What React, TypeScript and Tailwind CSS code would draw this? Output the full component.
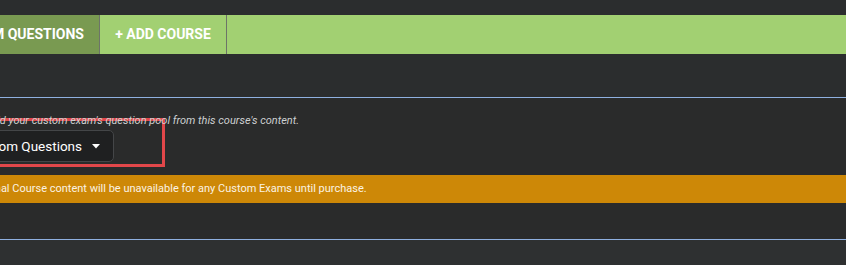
import React from 'react';

const App: React.FC = () => {
  return (
    <div className="w-[846px] h-[265px] overflow-hidden bg-[#2b2d2e] font-['Roboto',sans-serif] text-white">
      {/* Tabs bar */}
      <div className="pt-[15px]">
        <div className="flex h-[39px] bg-[#a2d072]">
          <div className="w-[100px] flex justify-end items-center overflow-hidden bg-[#799a51] border-r border-[#6d7468] pr-[15px]">
            <span className="whitespace-nowrap text-[14px] font-bold">CUSTOM QUESTIONS</span>
          </div>
          <div className="w-[127px] flex items-center justify-center border-r border-[#6d7468]">
            <span className="whitespace-nowrap text-[14px] font-bold">+ ADD COURSE</span>
          </div>
        </div>
      </div>

      {/* Sub header */}
      <div className="h-[44px] border-b border-[#8fb0e0] flex items-start pt-[8px]">
        <span className="-ml-[7px] text-[13px] text-[#cfd2d4]">e</span>
      </div>

      {/* Panel */}
      <div className="bg-[#2a2b2b] border-b border-[#8fb0e0] h-[142px] pt-[16px]">
        <p className="-ml-[18px] text-[11px] italic text-[#cdd0d1] leading-[14px] whitespace-nowrap">
          Build your custom exam's question pool from this course's content.
        </p>
        <div className="-ml-[60px] mt-[-10px] w-[225px] h-[49px] border-[3px] border-[#e2474a] flex items-start pt-[9px] pl-[15px]">
          <button className="h-[32px] pl-[12px] pr-[13px] flex items-center gap-[10px] rounded-[5px] border border-[#444648] bg-[#1f2021] text-[13.5px] text-white whitespace-nowrap">
            Custom Questions
            <svg width="8" height="5" viewBox="0 0 8 5">
              <path d="M0 0h8L4 4.5z" fill="#ffffff" />
            </svg>
          </button>
        </div>
        <div className="mt-[8px] h-[28px] bg-[#cd8807] flex items-center">
          <span className="-ml-[40px] text-[11px] text-[#fbf3e4] whitespace-nowrap">
            Additional Course content will be unavailable for any Custom Exams until purchase.
          </span>
        </div>
      </div>

      {/* Below */}
      <div className="h-[30px] bg-[#2e3031]" />
    </div>
  );
};

export default App;
